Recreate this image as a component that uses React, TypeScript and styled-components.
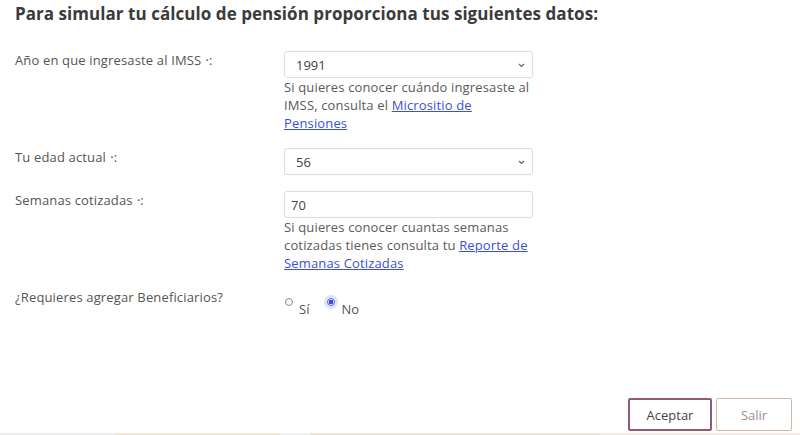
import React from "react";
import styled, { createGlobalStyle } from "styled-components";

const Global = createGlobalStyle`
  html, body { margin: 0; padding: 0; background: #fff; }
  body { font-family: "Open Sans", "Noto Sans", sans-serif; color: #4a4a4a; }
  * { box-sizing: border-box; }
`;

const Page = styled.div`
  width: 800px;
  height: 435px;
  display: flex;
  flex-direction: column;
  overflow: hidden;
`;

const Main = styled.div`
  flex: 1;
  padding: 3px 8px 0 15px;
  display: flex;
  flex-direction: column;
`;

const Title = styled.h1`
  margin: 0;
  font-size: 17px;
  line-height: 22px;
  font-weight: 700;
  color: #3b3b3b;
  letter-spacing: 0.05px;
`;

const Form = styled.div`
  margin-top: 26px;
  display: grid;
  grid-template-columns: 269px 249px;
  row-gap: 16px;
`;

const Label = styled.div`
  font-size: 13px;
  line-height: 18px;
  color: #555;
  letter-spacing: 0.15px;
`;

const Req = styled.span`
  color: #b03a5b;
  font-size: 8px;
  vertical-align: 2px;
  margin-left: 1px;
`;

const Field = styled.div`
  display: flex;
  flex-direction: column;
`;

const SelectWrap = styled.div`
  position: relative;
  height: 27px;
`;

const Select = styled.select`
  appearance: none;
  width: 100%;
  height: 27px;
  border: 1px solid #dcdcdc;
  border-radius: 3px;
  background: #fff;
  padding: 0 0 0 11px;
  font-family: inherit;
  font-size: 13px;
  color: #444;
  outline: none;
`;

const Chevron = styled.svg`
  position: absolute;
  right: 8px;
  top: 12px;
  pointer-events: none;
`;

const Input = styled.input`
  width: 100%;
  height: 27px;
  border: 1px solid #dcdcdc;
  border-radius: 3px;
  padding: 0 0 0 6px;
  font-family: inherit;
  font-size: 13px;
  color: #444;
  outline: none;
`;

const Help = styled.p`
  margin: 0;
  font-size: 13px;
  line-height: 18px;
  color: #5a5a5a;
  letter-spacing: 0.15px;
  white-space: nowrap;
  a { color: #3b4fd8; text-decoration: underline; }
`;

const Radios = styled.div`
  display: flex;
  gap: 18px;
  padding-top: 10px;
  padding-left: 1px;
`;

const RadioItem = styled.label`
  display: flex;
  align-items: flex-start;
  gap: 6px;
  font-size: 13px;
  color: #555;
`;

const Dot = styled.span<{ $on?: boolean }>`
  width: 8px;
  height: 8px;
  border-radius: 50%;
  border: 1px solid ${(p) => (p.$on ? "#4a5ce0" : "#8a8a8a")};
  background: ${(p) => (p.$on ? "radial-gradient(circle, #3d4fd6 0 2.2px, #fff 2.6px)" : "#fff")};
  box-shadow: ${(p) => (p.$on ? "0 0 0 3px rgba(90,110,240,0.2)" : "none")};
`;

const RadioText = styled.span`
  margin-top: 2px;
  line-height: 18px;
`;

const Actions = styled.div`
  margin-top: auto;
  display: flex;
  justify-content: flex-end;
  gap: 4px;
  padding: 0 0 2px 0;
`;

const Button = styled.button<{ $primary?: boolean }>`
  height: 33px;
  width: ${(p) => (p.$primary ? "84px" : "76px")};
  background: #fff;
  border: ${(p) => (p.$primary ? "2px solid #8e5a76" : "1px solid #cdbba8")};
  border-radius: 2px;
  font-family: inherit;
  font-size: 13px;
  color: ${(p) => (p.$primary ? "#4f4048" : "#9b8f8f")};
`;

const Footer = styled.div`
  height: 2px;
  display: flex;
`;

const Seg = styled.div<{ $w: number; $c: string }>`
  width: ${(p) => p.$w}px;
  background: ${(p) => p.$c};
`;

const Arrow = () => (
  <Chevron width="7" height="5" viewBox="0 0 7 5">
    <path d="M1 1 L3.5 3.5 L6 1" stroke="#666" strokeWidth="1.2" fill="none" />
  </Chevron>
);

export default function App() {
  return (
    <>
      <Global />
      <Page>
        <Main>
          <Title>Para simular tu cálculo de pensión proporciona tus siguientes datos:</Title>
          <Form>
            <Label>
              Año en que ingresaste al IMSS <Req>•</Req>:
            </Label>
            <Field>
              <SelectWrap>
                <Select defaultValue="1991">
                  <option>1991</option>
                </Select>
                <Arrow />
              </SelectWrap>
              <Help>
                Si quieres conocer cuándo ingresaste al
                <br />
                IMSS, consulta el <a href="#">Micrositio de</a>
                <br />
                <a href="#">Pensiones</a>
              </Help>
            </Field>

            <Label>
              Tu edad actual <Req>•</Req>:
            </Label>
            <Field>
              <SelectWrap>
                <Select defaultValue="56">
                  <option>56</option>
                </Select>
                <Arrow />
              </SelectWrap>
            </Field>

            <Label>
              Semanas cotizadas <Req>•</Req>:
            </Label>
            <Field>
              <Input defaultValue="70" />
              <Help>
                Si quieres conocer cuantas semanas
                <br />
                cotizadas tienes consulta tu <a href="#">Reporte de</a>
                <br />
                <a href="#">Semanas Cotizadas</a>
              </Help>
            </Field>

            <Label>¿Requieres agregar Beneficiarios?</Label>
            <Radios>
              <RadioItem>
                <Dot />
                <RadioText>Sí</RadioText>
              </RadioItem>
              <RadioItem>
                <Dot $on />
                <RadioText>No</RadioText>
              </RadioItem>
            </Radios>
          </Form>
          <Actions>
            <Button $primary>Aceptar</Button>
            <Button>Salir</Button>
          </Actions>
        </Main>
        <Footer>
          <Seg $w={115} $c="#eeeeee" />
          <Seg $w={165} $c="#efe6dc" />
          <Seg $w={30} $c="#f2f2f2" />
          <Seg $w={290} $c="#ebe4dc" />
          <Seg $w={200} $c="#f0ebe4" />
        </Footer>
      </Page>
    </>
  );
}
